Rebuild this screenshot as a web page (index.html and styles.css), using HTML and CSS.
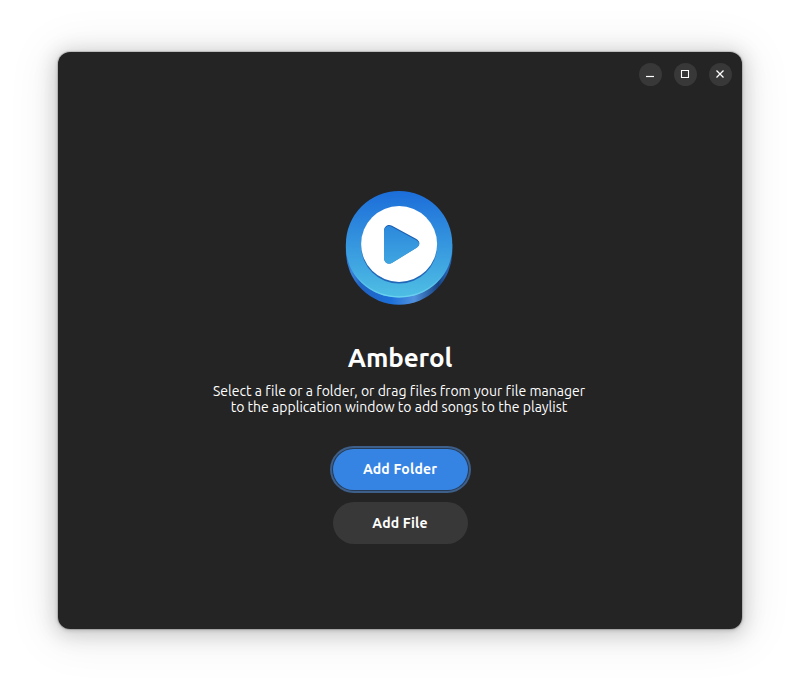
FILE: index.html
```
<!DOCTYPE html>
<html lang="en">
<head>
<meta charset="utf-8">
<title>Amberol</title>
<link rel="stylesheet" href="styles.css">
</head>
<body>
<main class="window">
  <header class="titlebar">
    <button class="control" aria-label="Minimize"><svg viewBox="0 0 24 24"><path d="M8 14.500h8" stroke="#fff" stroke-width="1.200"/></svg></button>
    <button class="control" aria-label="Maximize"><svg viewBox="0 0 24 24"><path d="M8.500 8.500h7v7h-7z" fill="none" stroke="#fff" stroke-width="1.100"/></svg></button>
    <button class="control" aria-label="Close"><svg viewBox="0 0 24 24"><path d="M8.500 8.500l7 7M15.500 8.500l-7 7" stroke="#fff" stroke-width="1.300"/></svg></button>
  </header>
  <section class="status">
    <svg class="logo" viewBox="0 0 108 116">
      <defs>
        <linearGradient id="side" x1="0" x2="1" y1="0" y2="0">
          <stop offset="0" stop-color="#2a6fcc"/><stop offset=".05" stop-color="#3b82dc"/><stop offset=".14" stop-color="#1f62c2"/>
          <stop offset=".42" stop-color="#1c6fd9"/><stop offset=".64" stop-color="#5091de"/><stop offset=".87" stop-color="#164384"/>
          <stop offset=".95" stop-color="#2563b4"/><stop offset="1" stop-color="#2360ad"/>
        </linearGradient>
        <linearGradient id="face" x1="0" x2="0" y1="0" y2="1">
          <stop offset="0" stop-color="#1c6dd9"/><stop offset="1" stop-color="#4fbfe4"/>
        </linearGradient>
        <linearGradient id="rim" x1="0" x2="0" y1="0" y2="1">
          <stop offset=".5" stop-color="#62cbed" stop-opacity="0"/><stop offset="1" stop-color="#6bd3f0"/>
        </linearGradient>
        <linearGradient id="play" gradientUnits="userSpaceOnUse" x1="0" x2="0" y1="15" y2="92">
          <stop offset="0" stop-color="#2278da"/><stop offset="1" stop-color="#48b4e2"/>
        </linearGradient>
      </defs>
      <path d="M.9 54v7.500a53.200 53.200 0 0 0 106.400 0V54z" fill="url(#side)"/>
      <path d="M.9 54.200a53.200 53.200 0 0 1 106.400 0v3a53.200 50.200 0 0 1-106.400 0z" fill="url(#face)"/>
      <path d="M1.500 57.200a52.600 49.600 0 0 0 105.200 0" fill="none" stroke="url(#rim)" stroke-width="1.300"/>
      <circle cx="54.100" cy="55.600" r="38" fill="#2267b7"/>
      <circle cx="54.100" cy="54" r="38" fill="#fff"/>
      <path d="M39 41c0-5 4-7.500 8-5.300l24 13.100c4.500 2.500 4.500 6.600 0 9.100L47 72.700c-4 2.200-8-.3-8-5.300z" fill="#1c5fae"/>
      <path d="M39 42c0-5 4-7.300 8-5.100l24 13c4.300 2.400 4.300 6 0 8.400L47 72.900c-4 2.200-8-.1-8-5.100z" fill="url(#play)"/>
    </svg>
    <h1 class="title">Amberol</h1>
    <p class="description">Select a file or a folder, or drag files from your file manager<br>to the application window to add songs to the playlist</p>
    <div class="actions">
      <button class="pill suggested">Add Folder</button>
      <button class="pill">Add File</button>
    </div>
  </section>
</main>
</body>
</html>
```
FILE: styles.css
```
* { box-sizing: border-box; }
body {
  margin: 0;
  height: 693px;
  padding: 52px 58px;
  overflow: hidden;
  background: #fff;
  color: #fff;
  font-family: Ubuntu, "Noto Sans", sans-serif;
}
.window {
  width: 684px;
  height: 577px;
  border-radius: 12px;
  background: #242424;
  box-shadow: 0 0 0 1px rgba(0,0,0,.12), 0 1px 4px rgba(0,0,0,.2), 0 3px 20px 4px rgba(0,0,0,.16), 0 4px 46px 12px rgba(0,0,0,.06);
}
button { border: 0; padding: 0; color: inherit; font: inherit; }
.titlebar {
  display: flex;
  justify-content: flex-end;
  gap: 12px;
  height: 46px;
  padding: 10.5px 10.5px 0 0;
}
.control {
  width: 23px;
  height: 23px;
  border-radius: 50%;
  background: #383838;
}
.control svg { display: block; width: 24px; height: 24px; margin: -.5px; }
.status {
  display: flex;
  flex-direction: column;
  align-items: center;
  padding-top: 92px;
}
.logo { display: block; width: 108px; height: 116px; margin-right: 2px; }
.title {
  margin: 34px 0 0;
  font-size: 26px;
  line-height: 36px;
  font-weight: 700;
  letter-spacing: -.12px;
}
.description {
  margin: 7px 2px 0 0;
  font-size: 14px;
  line-height: 16px;
  letter-spacing: .02px;
  text-align: center;
  white-space: nowrap;
  color: #fff;
}
.actions {
  display: flex;
  flex-direction: column;
  gap: 12px;
  margin: 33.5px 0 0;
}
.pill {
  width: 135px;
  height: 42px;
  border-radius: 21px;
  background: #383838;
  font-size: 14px;
  font-weight: 700;
  letter-spacing: .18px;
}
.suggested {
  height: 41.5px;
  background: #3584e4;
  box-shadow: 0 0 0 1px #263b55, 0 0 0 3px #3d5f8a;
}
```
